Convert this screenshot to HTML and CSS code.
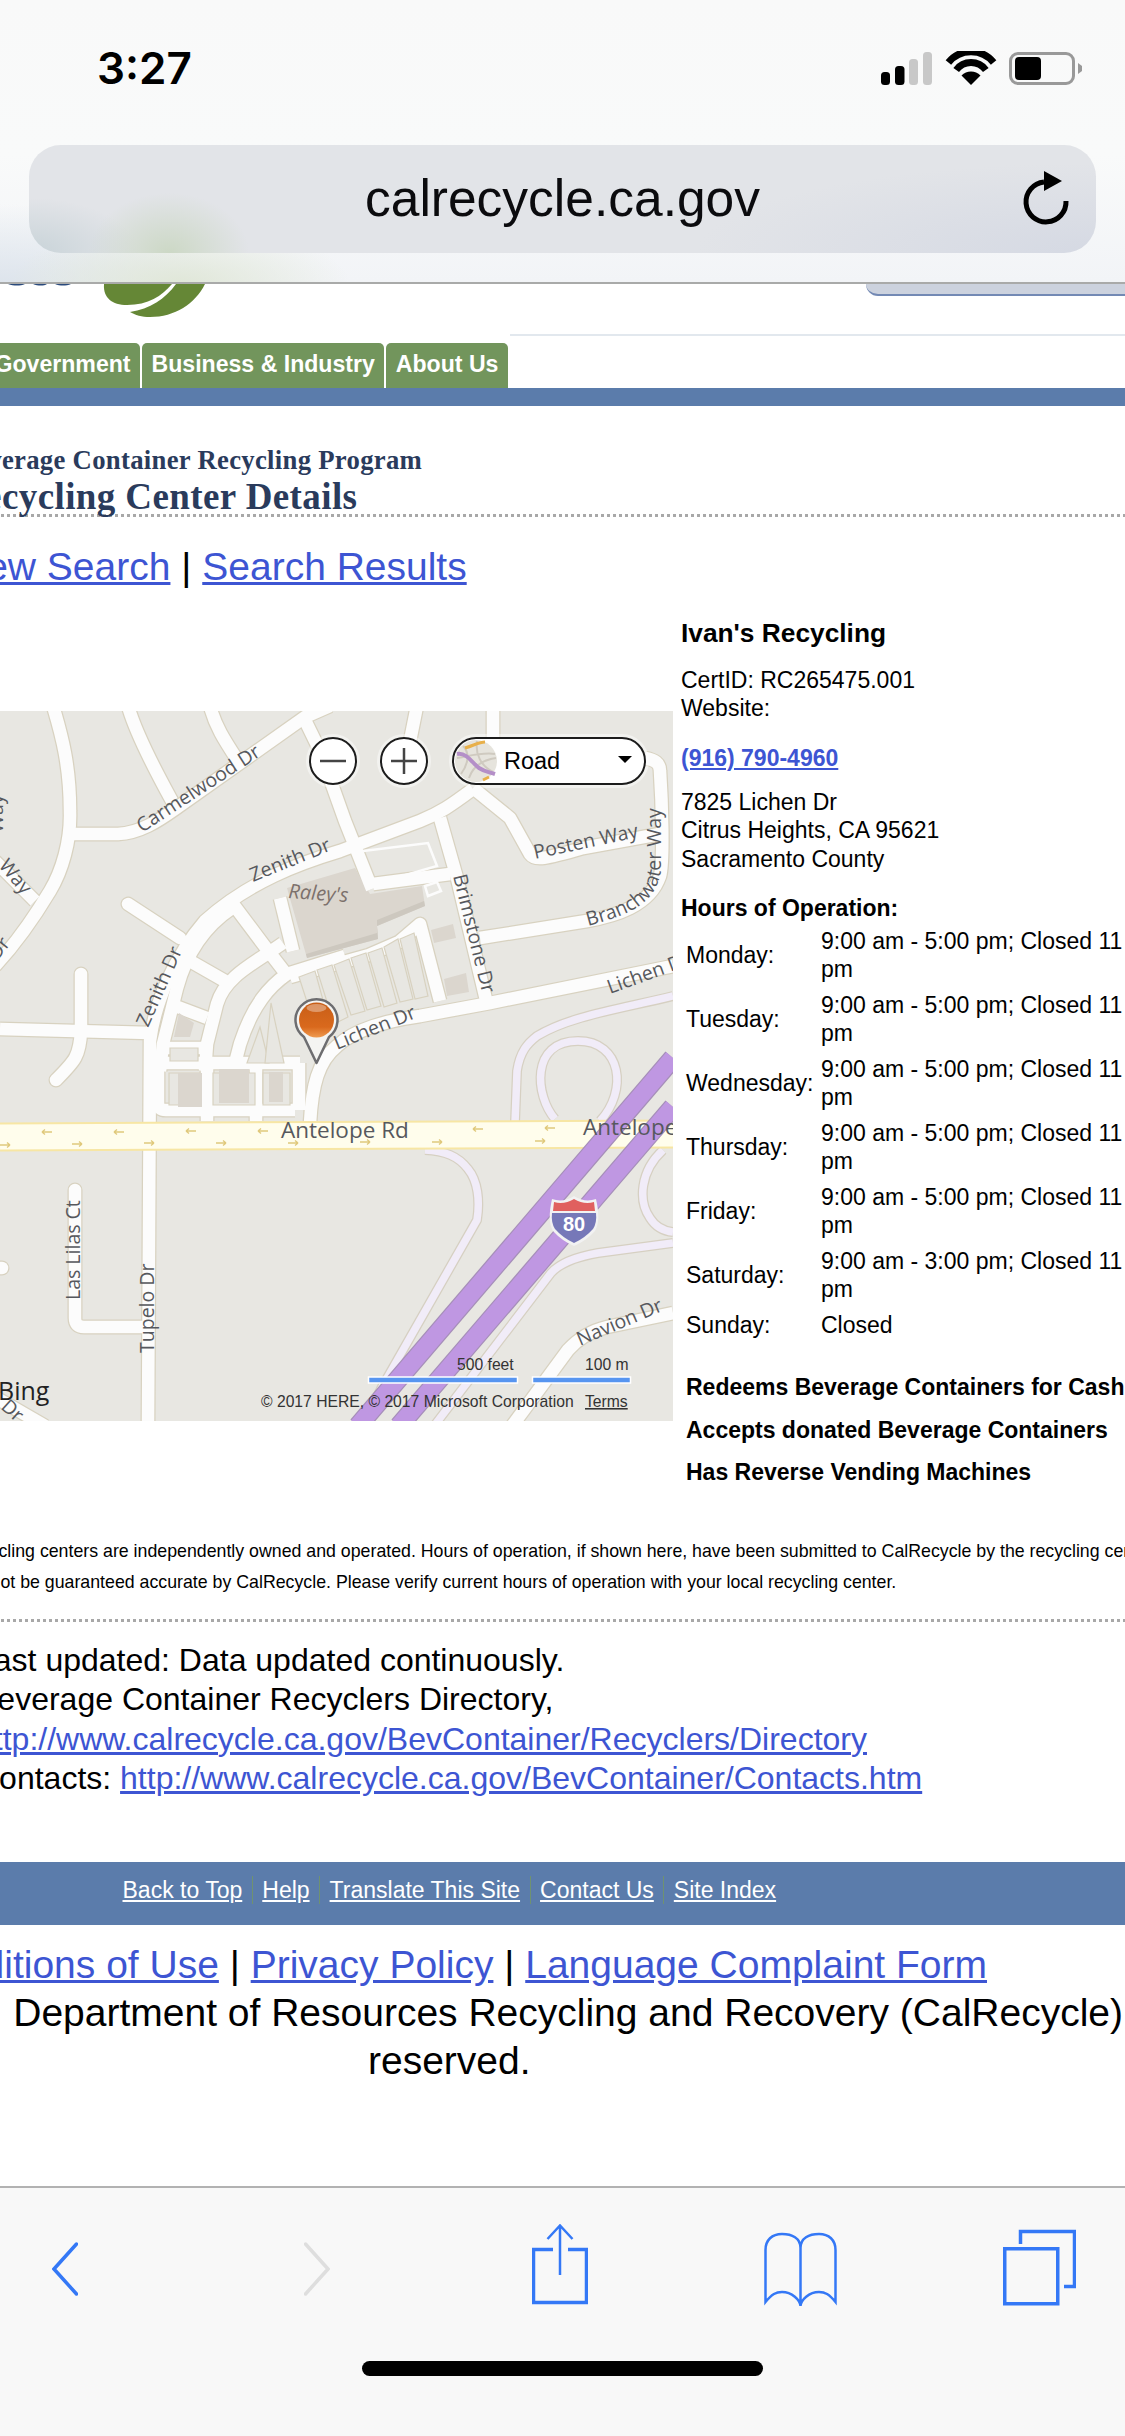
FILE: index.html
```html
<!DOCTYPE html>
<html lang="en">
<head>
<meta charset="utf-8">
<title>Recycling Center Details</title>
<link rel="stylesheet" href="styles.css">
</head>
<body>
<header class="chrome">
  <div class="status">
    <span class="time">3:27</span>
    <svg class="status-icons" width="202" height="36" viewBox="0 0 202 36">
      <rect x="1" y="21" width="9" height="13" rx="3.5" fill="#000"/>
      <rect x="15" y="15" width="9.5" height="19" rx="3.5" fill="#000"/>
      <rect x="29" y="8" width="9" height="26" rx="3.5" fill="#c8c8c8"/>
      <rect x="43" y="1" width="9" height="33" rx="3.5" fill="#c8c8c8"/>
      <path d="M68.400 11.500A29 29 0 0 1 113.600 11.500" fill="none" stroke="#000" stroke-width="7"/>
      <path d="M76.200 19A18.500 18.500 0 0 1 105.800 19" fill="none" stroke="#000" stroke-width="7"/>
      <path d="M91 34L81.500 24.500A13.500 13.500 0 0 1 100.500 24.500Z" fill="#000"/>
      <rect x="130.500" y="2.500" width="63" height="30" rx="7.500" fill="none" stroke="#999" stroke-width="3"/>
      <rect x="135" y="6" width="26" height="23" rx="4" fill="#000"/>
      <path d="M198 12L202 15V20L198 23Z" fill="#999"/>
    </svg>
  </div>
  <div class="urlbar">
    <span class="url">calrecycle.ca.gov</span>
    <svg class="reload" width="52" height="60" viewBox="0 0 52 60">
      <path d="M45 33A20 20 0 1 1 23 14" fill="none" stroke="#000" stroke-width="5"/>
      <path d="M23 3L41 13L23 23Z" fill="#000"/>
    </svg>
  </div>
</header>

<main class="viewport">
  <div class="page">
    <div class="brand">
      <svg class="logo" width="240" height="36" viewBox="0 0 240 36">
        <path d="M8 0C14 2 20 2 25 0ZM33 0C38 2 44 2 47 0ZM55 0C60 2 66 2 71 0Z" fill="#2a4a7c"/>
        <path d="M104 0C103 14 112 21 127 21C148 21 162 12 172 0Z" fill="#658736"/>
        <path d="M130 28C150 25 165 15 176 0L205 0C195 20 175 33 150 33C142 33 135 31 130 28Z" fill="#658736"/>
      </svg>
      <div class="search-box"></div>
    </div>
    <nav class="tabs">
      <a class="tab tab-first">Government</a>
      <a class="tab">Business &amp; Industry</a>
      <a class="tab">About Us</a>
      <div class="tabs-rule"></div>
    </nav>
    <div class="bluebar"></div>

    <p class="program">Beverage Container Recycling Program</p>
    <h1 class="title">Recycling Center Details</h1>
    <p class="crumbs"><a href="#">New Search</a> | <a href="#">Search Results</a></p>

    <section class="detail">
      <div class="map">
        <svg class="map-art" width="673" height="710" viewBox="0 0 673 710">
          <defs>
            <g id="roads-main">
              <path d="M53-5C62 25 70 55 70 100C71 130 62 160 50 180C38 200 20 228-5 255"/>
              <path d="M70 123L118 123C140 122 158 110 175 98L305 6L330-5"/>
              <path d="M128-5C135 20 150 50 172 90"/>
              <path d="M210-5C215 15 225 30 238 50"/>
              <path d="M303 5L320 40L345 110L372 178"/>
              <path d="M473 78C450 95 440 102 420 110L340 140C300 152 250 170 205 210C175 245 155 290 150 330L148 715"/>
              <path d="M232 197C205 215 187 240 177 277L163 333L160 360"/>
              <path d="M283 232C255 252 225 265 217 293L207 333L205 360"/>
              <path d="M345 245L287 263C270 275 253 293 240 333L233 360"/>
              <path d="M233 193L263 233L290 268"/>
              <path d="M280 187L293 240"/>
              <path d="M190 250L225 270"/>
              <path d="M170 293L207 307"/>
              <path d="M157 337L205 337"/>
              <path d="M155 352L300 352"/>
              <path d="M158 352L158 392Q158 399 166 399L295 399"/>
              <path d="M207 352L207 410M256 352L256 410M299 352L299 399"/>
              <path d="M310 412C312 375 318 350 337 335C355 318 385 310 420 305L490 292L673 255"/>
              <path d="M440 107L457 167L487 293"/>
              <path d="M373 173L450 163"/>
              <path d="M290 266L369 244L399 231L420 213L440 290"/>
              <path d="M480 227L587 210C615 205 650 195 660 165C664 150 662 90 660 60C660 52 655 49 645 47"/>
              <path d="M473 77L510 107L530 143C535 150 545 148 583 137L660 123"/>
              <path d="M417-5L410 30M493-5L493 30"/>
              <path d="M0 318L150 322"/>
              <path d="M81 263L81 319C80 345 75 350 56 369" stroke-linecap="round"/>
              <path d="M128 193L180 227" stroke-linecap="round"/>
              <path d="M-5 150L35 190"/>
              <path d="M75 479L75 607Q75 616 84 616L148 616" stroke-linecap="round"/>
              <path d="M-5 557L2 557" stroke-linecap="round"/>
              <path d="M-5 686L45 715"/>
              <path d="M673 602L607 616C590 620 578 628 568 639L512 715"/>
            </g>
            <g id="ramps">
              <path d="M515 412L517 360C520 340 528 332 537 325C570 305 620 298 673 285"/>
              <path d="M555 408C535 385 530 330 578 330C622 330 628 380 600 410"/>
              <path d="M425 439C445 440 458 445 468 458C478 470 480 490 477 509L382 676L362 715"/>
              <path d="M673 532L598 542C575 546 560 552 551 562L434 715"/>
              <path d="M663 439C640 460 638 490 650 507C655 515 663 520 673 521"/>
            </g>
            <path id="arrow-left" d="M-5 0H5M-5 0L-2-2.500M-5 0L-2 2.500"/>
            <path id="arrow-right" d="M-5 0H5M5 0L2-2.500M5 0L2 2.500"/>
            <path id="branch-path" d="M588 215C625 205 655 195 661 160L661 95"/>
            <linearGradient id="ball" x1="0" y1="0" x2="0" y2="1">
              <stop offset="0" stop-color="#c85e17"/>
              <stop offset=".7" stop-color="#d9691d"/>
              <stop offset="1" stop-color="#ef9a50"/>
            </linearGradient>
          </defs>
          <rect class="land" width="673" height="710"/>
          <use href="#ramps" class="ramp-case"/>
          <use href="#ramps" class="ramp-fill"/>
          <use href="#roads-main" class="road-case"/>
          <path class="raleys" d="M287 177L355 157L370 183L422 175L425 195L377 215L378 228L307 247Z"/>
          <path class="raleys-shade" d="M377 209L424 190L425 195L377 215L378 228L307 247L306 243L377 222Z"/>
          <use href="#roads-main" class="road-fill"/>
          <g class="thin-roads">
            <path d="M363 140L428 132L437 155L378 172"/>
            <path d="M425 175L437 171L441 180L428 185Z"/>
          </g>
          <g class="spots">
            <path d="M299 266L315 260L331 318L318 325Z"/>
            <path d="M317 259L332 254L348 306L334 313Z"/>
            <path d="M334 254L349 248L365 300L351 304Z"/>
            <path d="M351 247L366 242L381 295L367 299Z"/>
            <path d="M368 242L382 237L397 292L384 296Z"/>
            <path d="M384 236L398 228L413 288L400 291Z"/>
            <path d="M400 228L414 222L428 285L415 288Z"/>
            <path d="M260 316L269 352L247 352Z"/>
            <path d="M271 292L284 352L265 352Z"/>
            <path d="M169 362H200V394H169Z"/>
            <path d="M213 362H255V394H213Z"/>
            <path d="M263 362H290V394H263Z"/>
            <path d="M170 337H198V350H170Z"/>
          </g>
          <g class="buildings">
            <rect x="178" y="362" width="24" height="34"/>
            <rect x="219" y="358" width="30" height="34"/>
            <rect x="269" y="361" width="14" height="30"/>
            <path d="M179 302L194 312L190 326L174 326Z"/>
            <path d="M431 219L453 213L456 227L434 232Z"/>
            <path d="M444 268L466 262L469 281L447 285Z"/>
          </g>
          <path class="antelope-case" d="M0 426L673 423"/>
          <path class="antelope" d="M0 426L673 423"/>
          <g class="arrows">
            <use href="#arrow-left" x="47" y="421"/><use href="#arrow-left" x="119" y="421"/>
            <use href="#arrow-left" x="191" y="420"/><use href="#arrow-left" x="263" y="420"/>
            <use href="#arrow-left" x="478" y="418"/><use href="#arrow-left" x="550" y="417"/>
            <use href="#arrow-right" x="5" y="434"/><use href="#arrow-right" x="77" y="433"/>
            <use href="#arrow-right" x="149" y="432"/><use href="#arrow-right" x="221" y="432"/>
            <use href="#arrow-right" x="293" y="432"/><use href="#arrow-right" x="365" y="431"/>
            <use href="#arrow-right" x="437" y="431"/><use href="#arrow-right" x="540" y="430"/>
          </g>
          <path class="hwy-case" d="M358 715L673 347M399 715L673 396"/>
          <path class="hwy" d="M358 715L673 347M399 715L673 396"/>
          <g class="labels">
            <text transform="translate(142 122) rotate(-33)">Carmelwood Dr</text>
            <text transform="translate(253 171) rotate(-22)">Zenith Dr</text>
            <text transform="translate(148 317) rotate(-66)">Zenith Dr</text>
            <text transform="translate(535 148) rotate(-12)">Posten Way</text>
            <text><textPath href="#branch-path">Branchwater Way</textPath></text>
            <text transform="translate(453 165) rotate(76)">Brimstone Dr</text>
            <text transform="translate(337 339) rotate(-22)">Lichen Dr</text>
            <text transform="translate(610 283) rotate(-20)">Lichen Dr</text>
            <text transform="translate(80 589) rotate(-90)">Las Lilas Ct</text>
            <text transform="translate(154 642) rotate(-90)">Tupelo Dr</text>
            <text transform="translate(580 635) rotate(-23)">Navion Dr</text>
            <text transform="translate(-20 272) rotate(-52)">ne Dr</text>
            <text transform="translate(-2 155) rotate(50)">Way</text>
            <text transform="translate(0 697) rotate(42)">Dr</text>
            <text transform="translate(3 122) rotate(-90)">Way</text>
            <text class="label-place" transform="translate(288 187) rotate(4)">Raley's</text>
            <text class="label-big" x="281" y="427">Antelope Rd</text>
            <text class="label-big" x="583" y="424">Antelope Rd</text>
          </g>
          <g class="shield">
            <path class="shield-back" d="M552 488Q563 492 574 485Q585 492 596 488Q601 510 595 520Q586 530 574 535Q562 530 553 520Q547 510 552 488Z"/>
            <path class="shield-red" d="M554 491Q564 494 574 488Q584 494 594 491L595 500H553Z"/>
            <path class="shield-blue" d="M552 502H596Q597 512 593 518Q585 527 574 532Q563 527 555 518Q551 512 552 502Z"/>
            <text class="shield-num" x="574" y="520">80</text>
          </g>
          <g class="pin">
            <path class="pin-shell" d="M316.500 352L304 326A21 21 0 1 1 329 326Z"/>
            <circle cx="316.500" cy="309" r="17.500" fill="url(#ball)"/>
            <ellipse class="pin-shine" cx="316.500" cy="297" rx="10" ry="4"/>
          </g>
          <text class="bing" x="-2" y="689">Bing</text>
          <text class="map-small" x="457" y="659">500 feet</text>
          <text class="map-small" x="585" y="659">100 m</text>
          <rect class="scale-bar" x="368.500" y="666" width="149" height="6"/>
          <rect class="scale-bar" x="532.500" y="666" width="98" height="6"/>
          <text class="map-small" x="261" y="696">© 2017 HERE, © 2017 Microsoft Corporation</text>
          <text class="map-small map-terms" x="585" y="696">Terms</text>
        </svg>
        <div class="map-controls">
          <button class="zoom-btn"><svg width="28" height="28" viewBox="0 0 28 28"><path d="M1 14H27" stroke="#444" stroke-width="2.500"/></svg></button>
          <button class="zoom-btn zoom-plus"><svg width="28" height="28" viewBox="0 0 28 28"><path d="M1 14H27M14 1V27" stroke="#444" stroke-width="2.500"/></svg></button>
          <div class="style-pick">
            <svg width="42" height="42" viewBox="0 0 42 42">
              <circle cx="21" cy="21" r="21" fill="#e6e4dd"/>
              <path d="M8 6C16 14 12 26 6 34M22 1C20 14 26 26 38 32M2 18C14 16 28 12 40 14M14 38C18 26 28 20 41 18" fill="none" stroke="#cfcac0" stroke-width="2"/>
              <path d="M10 8C20 5 24 2 30 2M28 40L34 37" fill="none" stroke="#e8b04a" stroke-width="3"/>
              <path d="M2 14C12 12 18 24 24 28C30 32 34 32 40 34" fill="none" stroke="#b48fc8" stroke-width="4"/>
            </svg>
            <span class="style-name">Road</span>
            <span class="caret"></span>
          </div>
        </div>
      </div>

      <div class="info">
        <h2 class="center-name">Ivan's Recycling</h2>
        <p class="info-block cert">CertID: RC265475.001<br>Website:</p>
        <p class="info-block phone"><a href="#">(916) 790-4960</a></p>
        <p class="info-block address">7825 Lichen Dr<br>Citrus Heights, CA 95621<br>Sacramento County</p>
        <h3 class="hours-title">Hours of Operation:</h3>
        <div class="hours">
          <span class="day">Monday:</span><span>9:00 am - 5:00 pm; Closed 11<br>pm</span>
          <span class="day">Tuesday:</span><span>9:00 am - 5:00 pm; Closed 11<br>pm</span>
          <span class="day">Wednesday:</span><span>9:00 am - 5:00 pm; Closed 11<br>pm</span>
          <span class="day">Thursday:</span><span>9:00 am - 5:00 pm; Closed 11<br>pm</span>
          <span class="day">Friday:</span><span>9:00 am - 5:00 pm; Closed 11<br>pm</span>
          <span class="day">Saturday:</span><span>9:00 am - 3:00 pm; Closed 11<br>pm</span>
          <span class="day">Sunday:</span><span>Closed</span>
        </div>
        <ul class="features">
          <li>Redeems Beverage Containers for Cash</li>
          <li>Accepts donated Beverage Containers</li>
          <li>Has Reverse Vending Machines</li>
        </ul>
      </div>
    </section>

    <p class="disclaimer">Recycling centers are independently owned and operated. Hours of operation, if shown here, have been submitted to CalRecycle by the recycling center<br>Cannot be guaranteed accurate by CalRecycle. Please verify current hours of operation with your local recycling center.</p>

    <div class="updated">
      <p>Last updated: Data updated continuously.</p>
      <p>Beverage Container Recyclers Directory,</p>
      <p><a href="#">http://www.calrecycle.ca.gov/BevContainer/Recyclers/Directory</a></p>
      <p>Contacts: <a href="#">http://www.calrecycle.ca.gov/BevContainer/Contacts.htm</a></p>
    </div>

    <nav class="footer-bar">
      <a href="#">Back to Top</a><a href="#">Help</a><a href="#">Translate This Site</a><a href="#">Contact Us</a><a href="#">Site Index</a>
    </nav>

    <div class="legal">
      <p class="legal-line legal-links"><a href="#">Conditions of Use</a> | <a href="#">Privacy Policy</a> | <a href="#">Language Complaint Form</a></p>
      <p class="legal-line legal-dept">© 2017 State of California  Department of Resources Recycling and Recovery (CalRecycle)</p>
      <p class="legal-reserved">reserved.</p>
    </div>
  </div>
</main>

<footer class="toolbar">
  <div class="toolbar-icons">
    <svg class="tb-back" width="26" height="90" viewBox="0 0 26 90"><path d="M24.500 20L2 45L24.500 70" fill="none" stroke="#3478f6" stroke-width="3.500" stroke-linecap="round"/></svg>
    <svg class="tb-forward" width="26" height="90" viewBox="0 0 26 90"><path d="M1.500 20L24 45L1.500 70" fill="none" stroke="#dedede" stroke-width="3.500" stroke-linecap="round"/></svg>
    <svg class="tb-share" width="56" height="90" viewBox="0 0 56 90"><path d="M21 25.500H1.500V78.500H54.500V25.500H36" fill="none" stroke="#3478f6" stroke-width="3.500"/><path d="M28 1V51M15.500 15L28 1.500L40.500 15" fill="none" stroke="#3478f6" stroke-width="2.500"/></svg>
    <svg class="tb-book" width="73" height="90" viewBox="0 0 73 90"><path d="M36.500 24C36.500 14 28 10 18 10C8 10 1.500 16 1.500 26V78C8 70 12 68 18 68C28 68 36 76 36.500 82C37 76 45 68 55 68C61 68 65 70 71.500 78V26C71.500 16 65 10 55 10C45 10 36.500 14 36.500 24V82" fill="none" stroke="#3478f6" stroke-width="2.500"/></svg>
    <svg class="tb-tabs" width="73" height="90" viewBox="0 0 73 90"><rect x="1.750" y="24.750" width="53" height="55" fill="none" stroke="#3478f6" stroke-width="3.500"/><path d="M17.500 20V7.500H71.500V62.500H61" fill="none" stroke="#3478f6" stroke-width="3.500"/></svg>
  </div>
  <div class="home-bar"></div>
</footer>
</body>
</html>
```
FILE: styles.css
```css
* { box-sizing: border-box; }
html, body { margin: 0; padding: 0; }
body {
  width: 1125px;
  height: 2436px;
  overflow: hidden;
  display: flex;
  flex-direction: column;
  background: #fff;
  color: #000;
  font-family: "Liberation Sans", Arial, sans-serif;
}
p, h1, h2, h3, ul { margin: 0; padding: 0; }
a { color: #3d55d3; text-decoration: underline; }

/* Browser chrome */
.chrome {
  flex: none;
  height: 284px;
  border-bottom: 2px solid #a9aaa9;
  background:
    radial-gradient(ellipse 170px 60px at 180px 284px, #e0e7d8 0, rgba(224,231,216,0) 100%),
    radial-gradient(ellipse 220px 80px at 0 284px, #dde4ec 0, rgba(221,228,236,0) 100%),
    linear-gradient(#f9f9f9 0, #f9fafa 55%, #f2f4f7 100%);
}
.status {
  height: 145px;
  display: flex;
  align-items: flex-start;
  padding: 48px 43px 0 97px;
  justify-content: space-between;
}
.time {
  font-family: Inter, "Liberation Sans", sans-serif;
  font-weight: 600;
  font-size: 44px;
  line-height: 40px;
}
.status-icons { margin-top: 3px; }
.urlbar {
  position: relative;
  margin: 0 29px;
  height: 108px;
  border-radius: 32px;
  display: flex;
  align-items: center;
  justify-content: center;
  background:
    radial-gradient(ellipse 80px 60px at 140px 108px, #ccd8c5 0, rgba(204,216,197,0) 100%),
    radial-gradient(ellipse 110px 55px at 0 108px, #c8d3d8 0, rgba(200,211,216,0) 100%),
    radial-gradient(ellipse 400px 90px at 1067px 108px, #d5d9e3 0, rgba(213,217,227,0) 100%),
    #e2e4e8;
}
.url { font-size: 51.500px; line-height: 60px; color: #0b0b0e; margin-top: -2px; }
.reload { position: absolute; right: 23px; top: 23px; }

/* Page */
.viewport { flex: 1; overflow: hidden; background: #fff; }
.page { margin-left: -42px; width: 1500px; }

.brand { display: flex; height: 50px; align-items: flex-start; }
.logo { margin-left: 42px; flex: none; }
.search-box {
  margin-left: 626px;
  width: 320px;
  height: 12px;
  background: #ccd2de;
  border-bottom: 2px solid #7389b4;
  border-bottom-left-radius: 12px;
}
.tabs { display: flex; align-items: flex-end; height: 54px; gap: 2px; }
.tab {
  display: block;
  height: 45px;
  padding: 0 9.500px;
  background: #72955c;
  border-radius: 5px 5px 0 0;
  color: #fff;
  font-size: 23.100px;
  font-weight: 700;
  line-height: 43px;
  text-decoration: none;
  white-space: nowrap;
}
.tab-first { margin-left: 27px; }
.tabs-rule { flex: 1; align-self: flex-start; border-top: 2px solid #e2e8ee; }
.bluebar { height: 18px; background: #5b7cab; }

.program {
  margin-top: 36px;
  font-family: "Liberation Serif", Georgia, serif;
  font-weight: 700;
  font-size: 26.700px;
  letter-spacing: .3px;
  line-height: 36px;
  color: #2a3b5c;
  white-space: nowrap;
}
.title {
  margin-top: 1px;
  font-family: "Liberation Serif", Georgia, serif;
  font-weight: 700;
  font-size: 37px;
  letter-spacing: .4px;
  line-height: 35px;
  color: #2a3b5c;
  white-space: nowrap;
  border-bottom: 3px dotted #a8a8a8;
}
.crumbs {
  margin-top: 24.500px;
  font-size: 39px;
  line-height: 50px;
  white-space: nowrap;
}

/* Map + info */
.detail { display: flex; align-items: flex-start; margin-top: 26px; }
.map {
  position: relative;
  flex: none;
  margin-top: 93px;
  margin-left: 42px;
  width: 673px;
  height: 710px;
}
.map-art { display: block; }
.land { fill: #e8e7e2; }
.road-case { fill: none; stroke: #d8d2c0; stroke-width: 15; stroke-linejoin: round; }
.road-fill { fill: none; stroke: #fcfcfc; stroke-width: 12.500; stroke-linejoin: round; }
.ramp-case { fill: none; stroke: #d6d0c2; stroke-width: 10; }
.ramp-fill { fill: none; stroke: #f1ecf8; stroke-width: 7.500; }
.raleys { fill: #dbd6ce; }
.raleys-shade { fill: #cdc8bf; }
.thin-roads { fill: none; stroke: #fcfcfc; stroke-width: 2.500; }
.spots { fill: #e8e7e2; stroke: #d8d2c0; stroke-width: 1.200; }
.buildings { fill: #dbd6ce; }
.antelope-case { fill: none; stroke: #f7e6a4; stroke-width: 29; }
.antelope { fill: none; stroke: #fffdec; stroke-width: 25; }
.arrows use { fill: none; stroke: #e0c97c; stroke-width: 1.400; }
.hwy-case { fill: none; stroke: #a68fb9; stroke-width: 20; }
.hwy { fill: none; stroke: #bf97e2; stroke-width: 17.500; }
.labels text {
  font-family: "Open Sans", sans-serif;
  font-size: 19.500px;
  fill: #56585d;
}
.labels .label-place { font-style: italic; fill: #7c716c; font-size: 20px; }
.labels .label-big { font-size: 22.500px; }
.shield-back { fill: #f2f2f2; }
.shield-red { fill: #e0605f; }
.shield-blue { fill: #7678b8; }
.shield-num {
  font-family: "Liberation Sans", sans-serif;
  font-weight: 700;
  font-size: 20px;
  fill: #fff;
  text-anchor: middle;
}
.pin-shell { fill: #f4f4f2; stroke: #6d6d70; stroke-width: 2.500; stroke-linejoin: round; }
.pin-shine { fill: #fff; opacity: .35; }
.bing { font-family: "Open Sans", sans-serif; font-size: 25px; fill: #222; }
.map-small { font-family: "Liberation Sans", sans-serif; font-size: 15.700px; fill: #333; }
.map-terms { text-decoration: underline; }
.scale-bar { fill: #5795f0; stroke: #fff; stroke-width: 1.500; }

.map-controls {
  position: absolute;
  left: 309px;
  top: 26px;
  display: flex;
  align-items: center;
  gap: 23px;
}
.zoom-btn {
  display: flex;
  align-items: center;
  justify-content: center;
  width: 48px;
  height: 48px;
  padding: 0;
  background: #fff;
  border: 2px solid #1c1c1c;
  border-radius: 50%;
  box-shadow: 0 0 0 3px rgba(255,255,255,.45);
}
.style-pick {
  position: relative;
  display: flex;
  align-items: center;
  width: 194px;
  height: 48px;
  margin-left: 1px;
  padding-left: 1px;
  background: #fff;
  border: 2px solid #1c1c1c;
  border-radius: 24px;
  box-shadow: 0 0 0 3px rgba(255,255,255,.45);
}
.style-name { margin-left: 7px; font-size: 23.500px; line-height: 30px; }
.caret {
  position: absolute;
  right: 12px;
  top: 17px;
  border: 7.500px solid transparent;
  border-top: 7px solid #000;
  border-bottom: 0;
}

.info { flex: none; margin-left: 8px; width: 700px; font-size: 23px; line-height: 28.500px; }
.center-name { font-size: 26.300px; line-height: 30px; font-weight: 700; }
.info-block { white-space: nowrap; }
.cert { margin-top: 18px; }
.phone { margin-top: 21px; font-weight: 700; }
.address { margin-top: 15.500px; }
.hours-title { margin-top: 20.500px; font-size: 23px; line-height: 28.500px; font-weight: 700; }
.hours {
  display: grid;
  grid-template-columns: 135px 1fr;
  row-gap: 7px;
  margin-top: 4.500px;
  padding-left: 5px;
  white-space: nowrap;
}
.day { align-self: center; }
.features {
  list-style: none;
  margin-top: 34px;
  padding-left: 5px;
  font-weight: 700;
  white-space: nowrap;
}
.features li { margin-bottom: 14.200px; }

.disclaimer {
  margin-top: 35px;
  font-size: 17.750px;
  line-height: 31px;
  white-space: nowrap;
  padding-bottom: 21px;
  border-bottom: 3px dotted #a8a8a8;
}
.updated {
  margin-top: 19px;
  padding-left: 18px;
  font-size: 32px;
  line-height: 39.300px;
  white-space: nowrap;
}

.footer-bar {
  display: flex;
  align-items: flex-start;
  height: 63px;
  margin-top: 64px;
  padding: 14px 0 0 155px;
  background: #5b7cab;
  font-size: 23px;
  line-height: 28px;
}
.footer-bar a { color: #fff; padding: 0 9.500px; border-left: 1px solid #6f9270; }
.footer-bar a:first-child { border-left: 0; }

.legal { margin-top: 16px; font-size: 39px; line-height: 48px; white-space: nowrap; }
.legal-line { display: flex; justify-content: flex-end; gap: 0; white-space: pre; }
.legal-links { width: 1029px; }
.legal-dept { width: 1165px; }
.legal-reserved { padding-left: 410px; }

/* Toolbar */
.toolbar {
  flex: none;
  height: 250px;
  background: #f8f8f8;
  border-top: 2px solid #b2b2b2;
}
.toolbar-icons { display: flex; padding: 36px 0 0 52px; height: 173px; }
.tb-forward { margin-left: 226px; }
.tb-share { margin-left: 202px; }
.tb-book { margin-left: 176px; }
.tb-tabs { margin-left: 166px; }
.home-bar {
  width: 401px;
  height: 15px;
  margin-left: 362px;
  background: #000;
  border-radius: 8px;
}
```
